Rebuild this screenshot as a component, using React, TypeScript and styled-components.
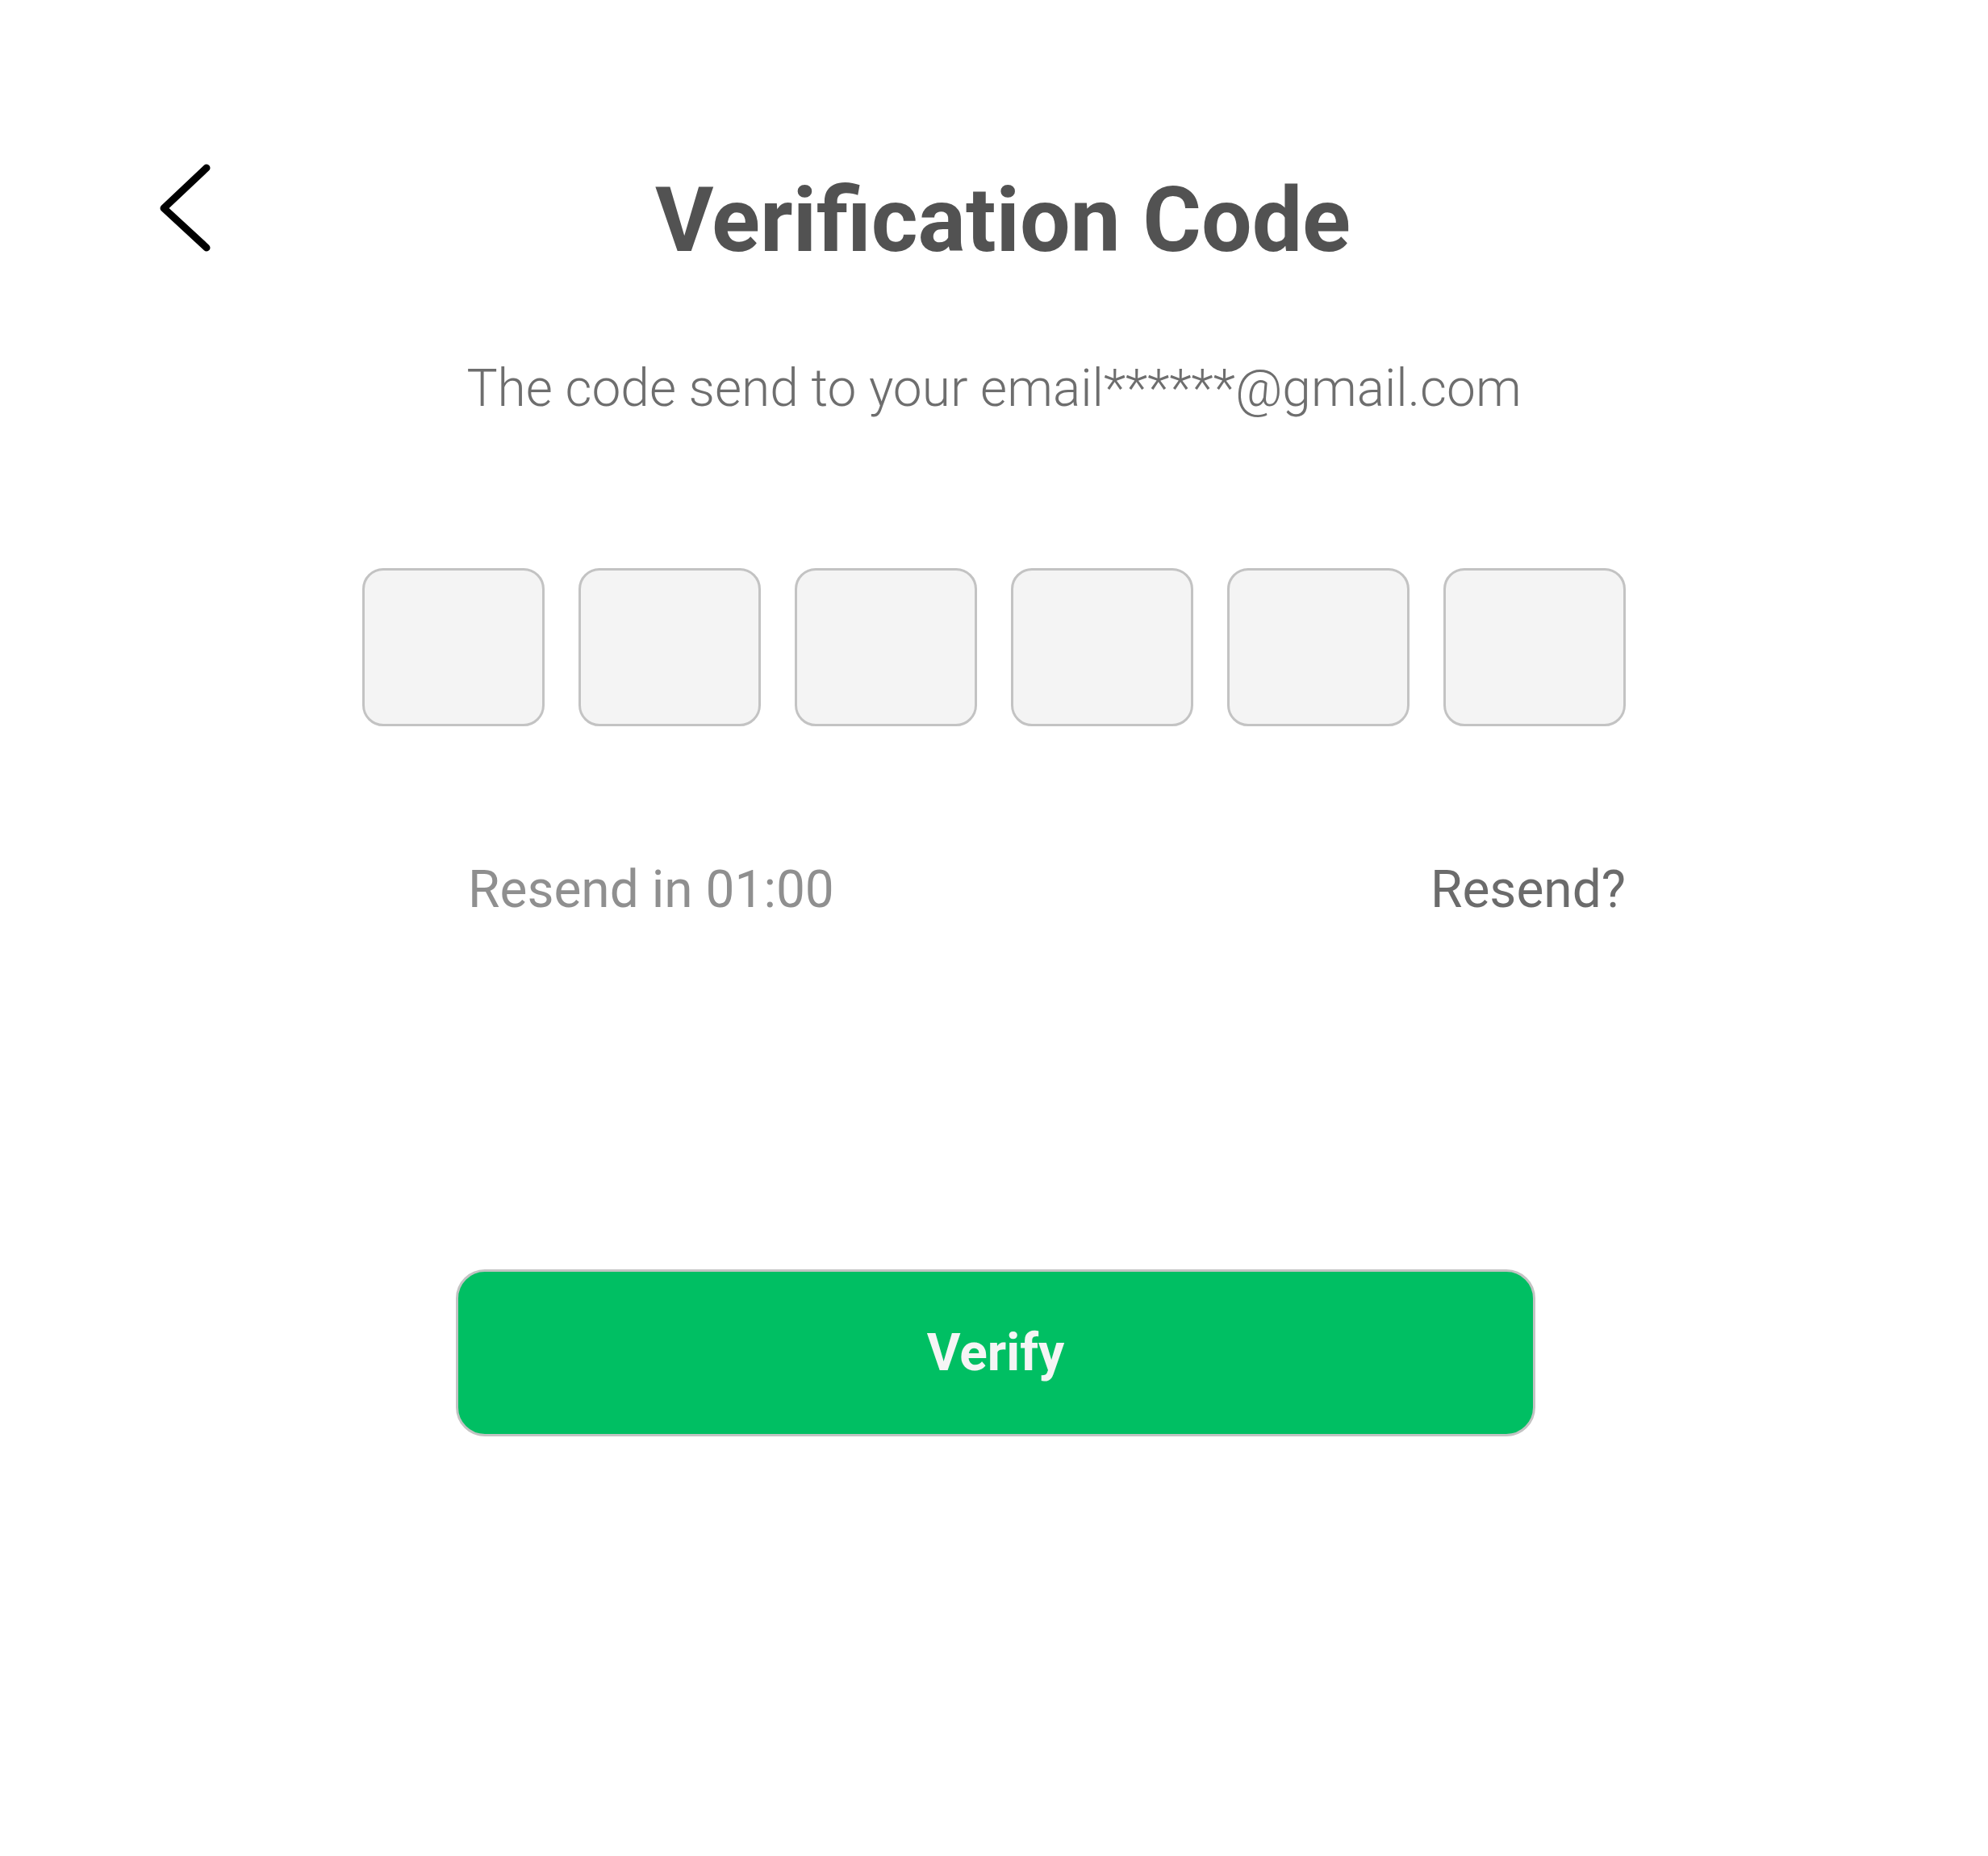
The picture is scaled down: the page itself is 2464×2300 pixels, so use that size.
import React from "react";
import styled, { createGlobalStyle } from "styled-components";

const GlobalStyle = createGlobalStyle`
  html, body {
    margin: 0;
    padding: 0;
    background: #ffffff;
  }
  body {
    font-family: Roboto, "Liberation Sans", Arial, sans-serif;
  }
`;

const Page = styled.main`
  width: 2464px;
  min-height: 2300px;
  display: flex;
  flex-direction: column;
  align-items: center;
  padding-top: 198px;
  box-sizing: border-box;
  background: #ffffff;
`;

const Header = styled.header`
  width: 100%;
  display: grid;
  grid-template-columns: 1fr auto 1fr;
  align-items: start;
  padding-left: 22px;
  box-sizing: border-box;
`;

const BackButton = styled.button`
  justify-self: start;
  margin-left: 172px;
  width: 72px;
  height: 120px;
  padding: 0;
  border: none;
  background: transparent;
  cursor: pointer;
  display: flex;
`;

const Title = styled.h1`
  margin: 10px 0 0;
  font-family: Roboto, "Liberation Sans", Arial, sans-serif;
  font-size: 111px;
  line-height: 130px;
  font-weight: 700;
  color: #525252;
  white-space: nowrap;
`;

const Subtitle = styled.p`
  margin: 106px 0 0;
  font-size: 64px;
  line-height: 75px;
  font-weight: 300;
  color: #6e6e6e;
  white-space: nowrap;
`;

const CodeRow = styled.div`
  margin-top: 185px;
  display: flex;
  gap: 42px;
`;

const CodeBox = styled.input`
  width: 226px;
  height: 196px;
  box-sizing: border-box;
  border: 3px solid #c3c3c3;
  border-radius: 26px;
  background: #f4f4f4;
  text-align: center;
  font-size: 90px;
  font-family: Roboto, "Liberation Sans", Arial, sans-serif;
  color: #525252;
  outline: none;
`;

const ResendRow = styled.div`
  margin-top: 165px;
  width: 1566px;
  padding-left: 131px;
  box-sizing: border-box;
  display: flex;
  justify-content: space-between;
  align-items: baseline;
`;

const ResendText = styled.span<{ $active?: boolean }>`
  font-size: 64px;
  line-height: 75px;
  font-weight: 400;
  color: ${(p) => (p.$active ? "#6b6b6b" : "#8f8f8f")};
  cursor: ${(p) => (p.$active ? "pointer" : "default")};
`;

const VerifyButton = styled.button`
  margin-top: 433px;
  margin-left: 4px;
  width: 1338px;
  height: 207px;
  box-sizing: border-box;
  border: 3px solid #c3c3c3;
  border-radius: 36px;
  background: #00bf63;
  color: #f5f5f5;
  font-family: Roboto, "Liberation Sans", Arial, sans-serif;
  font-size: 64px;
  font-weight: 700;
  cursor: pointer;
`;

const ChevronLeft = () => (
  <svg width="72" height="120" viewBox="0 0 72 120" fill="none">
    <polyline
      points="62,10 9,60 62,109"
      stroke="#000000"
      strokeWidth="9"
      strokeLinecap="round"
      strokeLinejoin="round"
    />
  </svg>
);

export default function App() {
  return (
    <>
      <GlobalStyle />
      <Page>
        <Header>
          <BackButton aria-label="Back">
            <ChevronLeft />
          </BackButton>
          <Title>Verification Code</Title>
          <span />
        </Header>
        <Subtitle>The code send to your email******@gmail.com</Subtitle>
        <CodeRow>
          {Array.from({ length: 6 }).map((_, i) => (
            <CodeBox key={i} maxLength={1} aria-label={`Digit ${i + 1}`} />
          ))}
        </CodeRow>
        <ResendRow>
          <ResendText>Resend in 01:00</ResendText>
          <ResendText $active>Resend?</ResendText>
        </ResendRow>
        <VerifyButton>Verify</VerifyButton>
      </Page>
    </>
  );
}
